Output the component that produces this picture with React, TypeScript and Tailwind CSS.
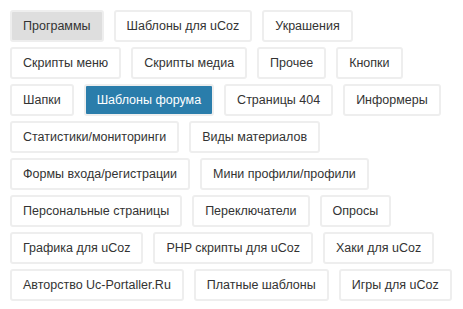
const ITEMS = [
  "Программы",
  "Шаблоны для uCoz",
  "Украшения",
  "Скрипты меню",
  "Скрипты медиа",
  "Прочее",
  "Кнопки",
  "Шапки",
  "Шаблоны форума",
  "Страницы 404",
  "Информеры",
  "Статистики/мониторинги",
  "Виды материалов",
  "Формы входа/регистрации",
  "Мини профили/профили",
  "Персональные страницы",
  "Переключатели",
  "Опросы",
  "Графика для uCoz",
  "PHP скрипты для uCoz",
  "Хаки для uCoz",
  "Авторство Uc-Portaller.Ru",
  "Платные шаблоны",
  "Игры для uCoz",
];

function Tag({ label }: { label: string }) {
  const active = label === "Шаблоны форума";
  const hovered = label === "Программы";

  let cls = "bg-white text-[#333]";
  if (active) cls = "bg-[#2a7dab] text-white";
  if (hovered) cls = "bg-[#dedede] text-[#333]";

  return (
    <a
      href="#"
      className={`flex h-8 items-center rounded-[3px] border-2 border-[#eeeeee] px-[11px] text-[12.5px] leading-none ${cls}`}
    >
      {label}
    </a>
  );
}

export default function App() {
  return (
    <div
      className="min-h-[309px] w-[463px] bg-white pb-[10px] pl-[10px] pr-[7px] pt-[10px]"
      style={{ fontFamily: '"Liberation Sans", Arial, sans-serif' }}
    >
      <div className="flex flex-wrap gap-x-[10px] gap-y-[5px]">
        {ITEMS.map((item) => (
          <Tag key={item} label={item} />
        ))}
      </div>
    </div>
  );
}
